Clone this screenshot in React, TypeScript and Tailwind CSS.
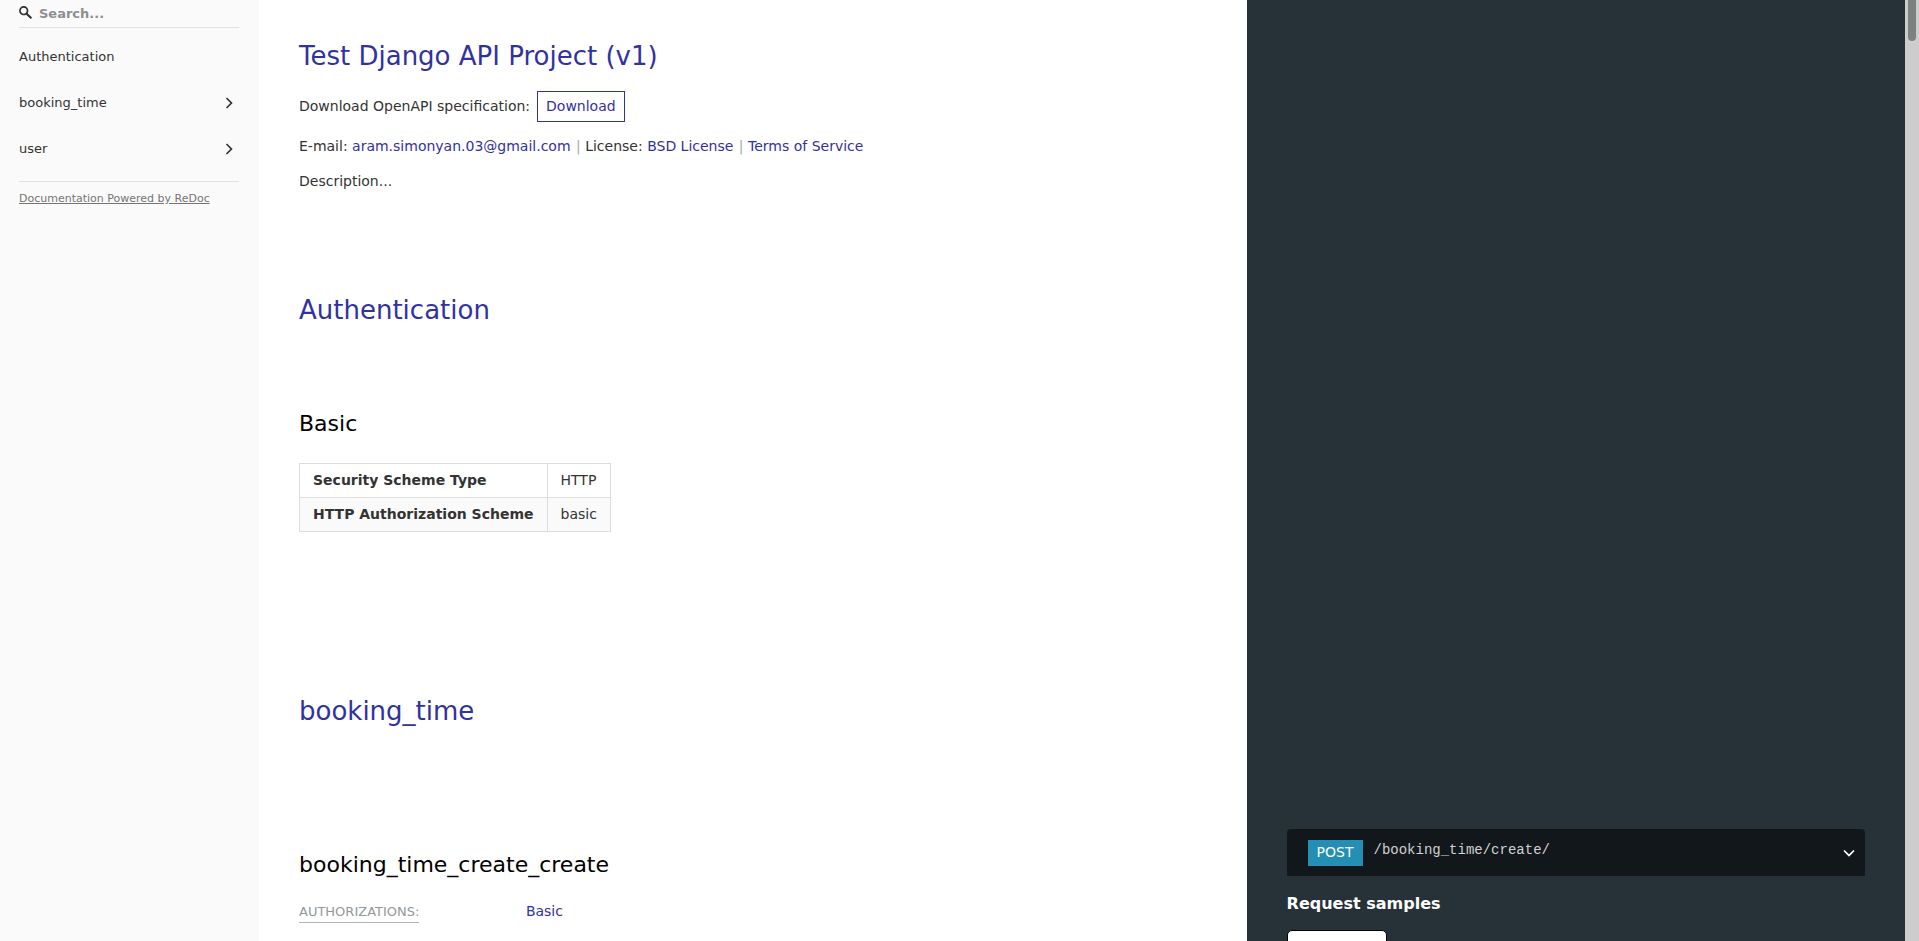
import type { ReactNode } from "react";

function Chevron({ className = "" }: { className?: string }) {
  return (
    <svg viewBox="0 0 24 24" aria-hidden="true" className={`size-5 shrink-0 fill-current ${className}`}>
      <polygon points="17.3 8.3 12 13.6 6.7 8.3 5.3 9.7 12 16.4 18.7 9.7" />
    </svg>
  );
}

function SearchIcon() {
  return (
    <svg viewBox="0 0 1000 1000" aria-hidden="true" className="size-[13px] shrink-0 fill-[#333333]">
      <path d="M968.2,849.4L667.3,549c83.9-136.5,66.7-317.4-51.7-435.6C477.1-25,252.5-25,113.9,113.4c-138.5,138.3-138.5,362.6,0,501C219.2,730.1,413.2,743,547.6,666.5l301.9,301.4c43.6,43.6,76.9,14.9,104.2-12.4C981,928.3,1011.8,893,968.2,849.4z M524.5,522c-88.9,88.7-233,88.7-321.8,0c-88.9-88.7-88.9-232.6,0-321.3c88.9-88.7,233-88.7,321.8,0C613.4,289.4,613.4,433.3,524.5,522z" />
    </svg>
  );
}

function Row({ children, right, className = "" }: { children: ReactNode; right?: ReactNode; className?: string }) {
  return (
    <section className={`flex ${className}`}>
      <div className="w-3/5 px-10 pt-10">{children}</div>
      <div className="w-2/5 bg-[#263238] px-10 pt-10">{right}</div>
    </section>
  );
}

function Title({ children }: { children: ReactNode }) {
  return <h1 className="text-[26px] leading-8 text-[#32329f]">{children}</h1>;
}

function Link({ children }: { children: ReactNode }) {
  return (
    <a href="#" className="text-[#32329f]">
      {children}
    </a>
  );
}

function Sidebar() {
  return (
    <nav className="w-[259px] shrink-0 bg-[#fafafa] pl-[19px] pr-5 text-[13px] leading-[18px]">
      <label className="flex h-7 items-center gap-[7px] border-b border-[#e1e1e1] pb-[3px]">
        <SearchIcon />
        <input
          type="text"
          aria-label="Search"
          placeholder="Search..."
          className="min-w-0 flex-1 bg-transparent pt-[3px] font-bold outline-none placeholder:text-[#8f8f8f]"
        />
      </label>
      <ul className="pt-[6px]">
        <li>
          <a href="#authentication" className="flex h-[46px] items-center">
            Authentication
          </a>
        </li>
        {["booking_time", "user"].map((name) => (
          <li key={name}>
            <button type="button" className="flex h-[46px] w-full items-center justify-between">
              {name}
              <Chevron className="-rotate-90" />
            </button>
          </li>
        ))}
      </ul>
      <div className="mt-[9px] border-t border-[#e1e1e1] pt-[7px]">
        <a href="#" className="text-[11px] text-[#757575] underline">
          Documentation Powered by ReDoc
        </a>
      </div>
    </nav>
  );
}

function Samples() {
  return (
    <>
      <button
        type="button"
        className="flex h-[47px] w-full items-center rounded-t bg-[#11171a] pl-[21px] pr-[6px] text-left text-white"
      >
        <span className="bg-[#248fb2] px-[9px] pb-1 pt-[2px] leading-5">POST</span>
        <span className="flex-1 pb-1 pl-[11px] font-[Courier,'Liberation_Mono',monospace] text-[#d0d2d3]">
          /booking_time/create/
        </span>
        <Chevron />
      </button>
      <h3 className="mt-4 text-[16px] font-bold leading-6 text-white">Request samples</h3>
      <button
        type="button"
        aria-label="Payload"
        className="mt-[14px] block h-10 w-[100px] rounded-[5px] border border-black bg-white"
      />
    </>
  );
}

export default function App() {
  return (
    <div className="flex h-screen overflow-hidden bg-white font-['DejaVu_Sans',sans-serif] text-[14px] leading-[21px] text-[#333333]">
      <Sidebar />
      <main className="min-w-0 flex-1">
        <Row className="h-[254px]">
          <Title>Test Django API Project (v1)</Title>
          <p className="mt-[19px] flex items-center gap-[7px]">
            Download OpenAPI specification:
            <a href="#" className="border border-[#32329f] px-2 py-1 text-[#32329f]">
              Download
            </a>
          </p>
          <p className="mt-[14px]">
            E-mail: <Link>aram.simonyan.03@gmail.com</Link> <span className="pl-px text-[#aaaaaa]">|</span> License:{" "}
            <Link>BSD License</Link> <span className="pl-px text-[#aaaaaa]">|</span> <Link>Terms of Service</Link>
          </p>
          <p className="mt-[14px]">Description...</p>
        </Row>
        <Row className="h-[401px]">
          <Title>Authentication</Title>
          <h2 className="mt-[84px] text-[22px] leading-7 text-black">Basic</h2>
          <table className="mt-[25px] border-collapse text-left">
            <tbody>
              <tr>
                <th className="border border-[#dddddd] px-[13px] py-[6px] font-bold">Security Scheme Type</th>
                <td className="border border-[#dddddd] px-[13px] py-[6px]">HTTP</td>
              </tr>
              <tr className="bg-[#fafafa]">
                <th className="border border-[#dddddd] px-[13px] py-[6px] font-bold">HTTP Authorization Scheme</th>
                <td className="border border-[#dddddd] px-[13px] py-[6px]">basic</td>
              </tr>
            </tbody>
          </table>
        </Row>
        <Row className="h-[134px]">
          <Title>booking_time</Title>
        </Row>
        <Row right={<Samples />}>
          <h2 className="mt-[22px] text-[22px] leading-7 text-black">booking_time_create_create</h2>
          <div className="mt-[22px] flex items-start">
            <div className="w-1/4">
              <span className="inline-block border-b border-[#b3b3b3] text-[13px] leading-5 text-[#939899]">
                AUTHORIZATIONS:
              </span>
            </div>
            <Link>Basic</Link>
          </div>
        </Row>
      </main>
      <div className="w-[14px] shrink-0 bg-[#cdcdcd] px-[3px]" aria-hidden="true">
        <div className="h-[41px] rounded-b-full bg-[#7d8280]" />
      </div>
    </div>
  );
}
